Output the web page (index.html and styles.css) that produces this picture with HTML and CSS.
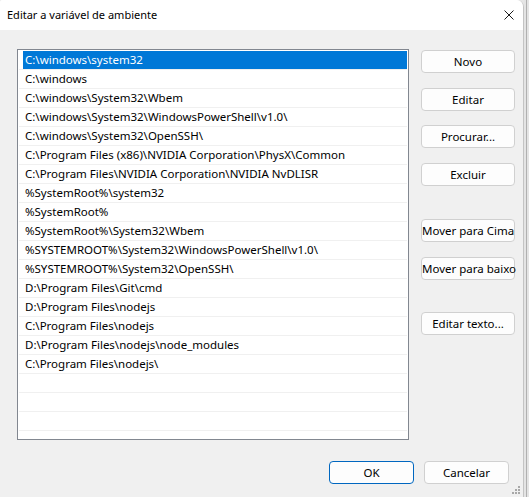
FILE: index.html
```html
<!DOCTYPE html>
<html lang="pt">
<head>
<meta charset="utf-8">
<title>Editar a variável de ambiente</title>
<link rel="stylesheet" href="styles.css">
</head>
<body>
<div class="screen">
  <div class="window">
    <div class="titlebar">
      <span class="title">Editar a variável de ambiente</span>
      <span class="close">
        <svg width="10" height="10" viewBox="0 0 10 10"><path d="M0.5 0.5 L9.5 9.5 M9.5 0.5 L0.5 9.5" stroke="#1a1a1a" stroke-width="1" fill="none"/></svg>
      </span>
    </div>
    <div class="content">
      <div class="main">
        <div class="list">
          <div class="row selected"><span class="cell">C:\windows\system32</span></div>
          <div class="row"><span class="cell">C:\windows</span></div>
          <div class="row"><span class="cell">C:\windows\System32\Wbem</span></div>
          <div class="row"><span class="cell">C:\windows\System32\WindowsPowerShell\v1.0\</span></div>
          <div class="row"><span class="cell">C:\windows\System32\OpenSSH\</span></div>
          <div class="row"><span class="cell">C:\Program Files (x86)\NVIDIA Corporation\PhysX\Common</span></div>
          <div class="row"><span class="cell">C:\Program Files\NVIDIA Corporation\NVIDIA NvDLISR</span></div>
          <div class="row"><span class="cell">%SystemRoot%\system32</span></div>
          <div class="row"><span class="cell">%SystemRoot%</span></div>
          <div class="row"><span class="cell">%SystemRoot%\System32\Wbem</span></div>
          <div class="row"><span class="cell">%SYSTEMROOT%\System32\WindowsPowerShell\v1.0\</span></div>
          <div class="row"><span class="cell">%SYSTEMROOT%\System32\OpenSSH\</span></div>
          <div class="row"><span class="cell">D:\Program Files\Git\cmd</span></div>
          <div class="row"><span class="cell">D:\Program Files\nodejs</span></div>
          <div class="row"><span class="cell">C:\Program Files\nodejs</span></div>
          <div class="row"><span class="cell">D:\Program Files\nodejs\node_modules</span></div>
          <div class="row"><span class="cell">C:\Program Files\nodejs\</span></div>
          <div class="row"><span class="cell"></span></div>
          <div class="row"><span class="cell"></span></div>
          <div class="row"><span class="cell"></span></div>
          <div class="row"><span class="cell"></span></div>
        </div>
        <div class="side">
          <button class="btn">Novo</button>
          <button class="btn step">Editar</button>
          <button class="btn">Procurar...</button>
          <button class="btn step">Excluir</button>
          <button class="btn group-a">Mover para Cima</button>
          <button class="btn step">Mover para baixo</button>
          <button class="btn group-b">Editar texto...</button>
        </div>
      </div>
      <div class="footer">
        <button class="btn foot default">OK</button>
        <button class="btn foot">Cancelar</button>
      </div>
    </div>
    <svg class="grip" width="10" height="10" viewBox="0 0 10 10">
      <rect x="7" y="0" width="2" height="2" fill="#a8a8a8"/>
      <rect x="4" y="3" width="2" height="2" fill="#a8a8a8"/>
      <rect x="7" y="3" width="2" height="2" fill="#a8a8a8"/>
      <rect x="1" y="6" width="2" height="2" fill="#a8a8a8"/>
      <rect x="4" y="6" width="2" height="2" fill="#a8a8a8"/>
      <rect x="7" y="6" width="2" height="2" fill="#a8a8a8"/>
    </svg>
  </div>
  <div class="strip"><div class="strip-line"></div></div>
</div>
</body>
</html>
```

FILE: styles.css
```css
html, body {
  margin: 0;
  padding: 0;
}
body {
  width: 529px;
  height: 497px;
  overflow: hidden;
  font-family: "Noto Sans", "Open Sans", sans-serif;
  font-size: 11.5px;
  color: #000;
  background: #e6e6e6;
}
.screen {
  display: flex;
  width: 529px;
  height: 497px;
}
.window {
  position: relative;
  flex: none;
  width: 523px;
  height: 497px;
  border-right: 1px solid #c4c4c4;
  background: #f0f0f0;
  border-top-right-radius: 7px;
  border-top-left-radius: 2px;
  overflow: hidden;
  display: flex;
  flex-direction: column;
}
.titlebar {
  height: 30px;
  flex: none;
  background: #ffffff;
  display: flex;
  align-items: center;
  justify-content: space-between;
  padding: 0 9px 0 7px;
}
.title {
  font-size: 11px;
  line-height: 16px;
}
.close {
  display: flex;
  width: 10px;
  height: 10px;
}
.content {
  flex: 1;
  padding: 19px 8px 0 17px;
  display: flex;
  flex-direction: column;
}
.main {
  display: flex;
  gap: 12px;
}
.list {
  flex: none;
  box-sizing: border-box;
  width: 392px;
  height: 391px;
  border: 1px solid #828790;
  background: #fff;
  padding: 1px 1px 0 1px;
  overflow: hidden;
}
.row {
  height: 18px;
  border-bottom: 1px solid #f0f0f0;
  display: flex;
}
.cell {
  flex: 1;
  margin-left: 4px;
  padding-left: 2px;
  line-height: 18px;
  white-space: nowrap;
}
.row.selected .cell {
  background: #0078d7;
  color: #fff;
}
.side {
  flex: none;
  display: flex;
  flex-direction: column;
  gap: 14px;
  padding-top: 1px;
}
.btn {
  box-sizing: border-box;
  width: 94px;
  height: 23px;
  margin: 0;
  padding: 0;
  border: 1px solid #d0d0d0;
  border-radius: 4px;
  background: #fdfdfd;
  font-family: "Noto Sans", "Open Sans", sans-serif;
  font-size: 11.5px;
  color: #000;
  white-space: nowrap;
}
.btn.step {
  margin-top: 1px;
}
.btn.group-a {
  margin-top: 19px;
}
.btn.group-b {
  margin-top: 18px;
}
.footer {
  display: flex;
  justify-content: flex-end;
  gap: 10px;
  margin-top: 21px;
  padding-right: 6px;
}
.btn.foot {
  width: 85px;
}
.btn.default {
  border-color: #0067c0;
}
.grip {
  position: absolute;
  right: 2px;
  bottom: 1px;
}
.strip {
  flex: 1;
  position: relative;
  background: #e4e4e4;
}
.strip-line {
  margin-left: 2px;
  width: 1px;
  height: 100%;
  background: #b0b0b0;
}
```
